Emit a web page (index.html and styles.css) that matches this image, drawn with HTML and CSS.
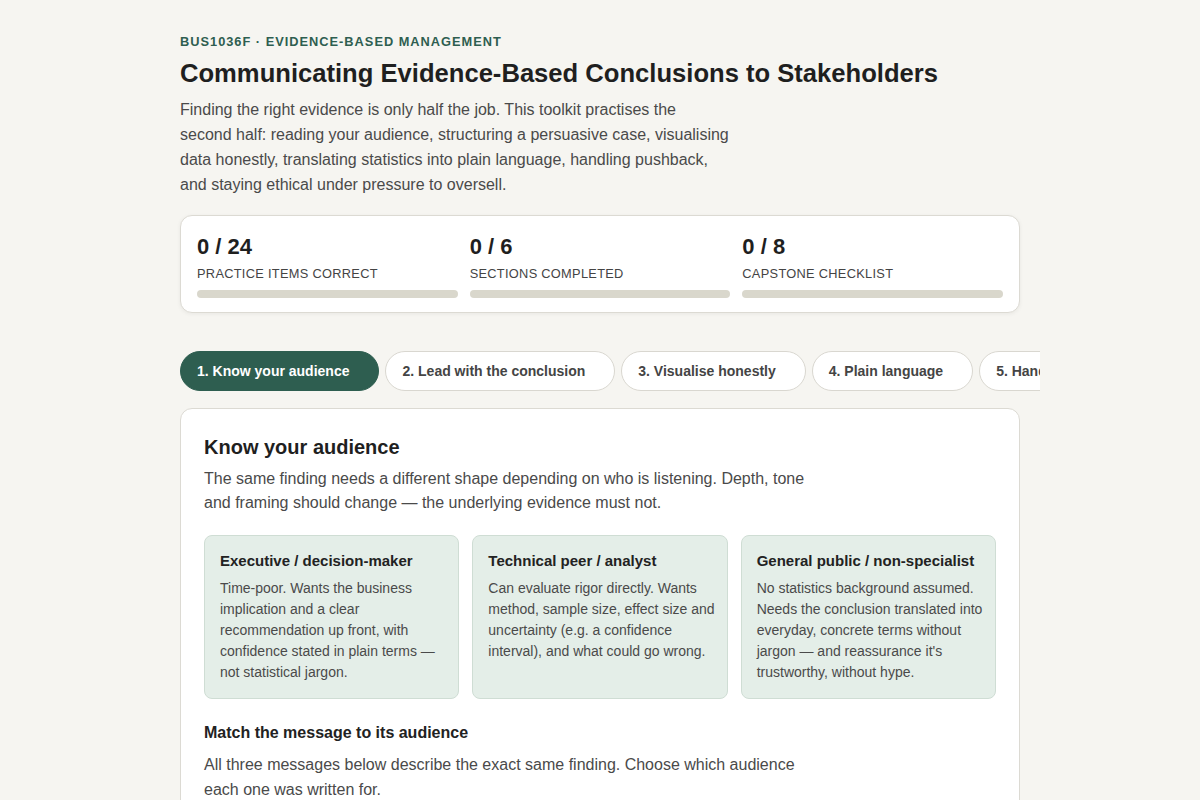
FILE: index.html
```html
<!DOCTYPE html>
<html lang="en">
<head>
<meta charset="utf-8">
<title>Communicating Evidence-Based Conclusions to Stakeholders</title>
<link rel="stylesheet" href="styles.css">
</head>
<body>
<main class="page">
  <header class="intro">
    <div class="kicker">BUS1036F · Evidence-Based Management</div>
    <h1 class="title">Communicating Evidence-Based Conclusions to Stakeholders</h1>
    <p class="lead">Finding the right evidence is only half the job. This toolkit practises the second half: reading your audience, structuring a persuasive case, visualising data honestly, translating statistics into plain language, handling pushback, and staying ethical under pressure to oversell.</p>
  </header>

  <section class="stats">
    <div class="stat">
      <div class="stat-num">0 / 24</div>
      <div class="stat-label">Practice items correct</div>
      <div class="bar"><div class="bar-fill" style="width:0%"></div></div>
    </div>
    <div class="stat">
      <div class="stat-num">0 / 6</div>
      <div class="stat-label">Sections completed</div>
      <div class="bar"><div class="bar-fill" style="width:0%"></div></div>
    </div>
    <div class="stat">
      <div class="stat-num">0 / 8</div>
      <div class="stat-label">Capstone checklist</div>
      <div class="bar"><div class="bar-fill" style="width:0%"></div></div>
    </div>
  </section>

  <nav class="tabs">
    <button class="tab active">1. Know your audience<span class="tab-mark"></span></button>
    <button class="tab">2. Lead with the conclusion<span class="tab-mark"></span></button>
    <button class="tab">3. Visualise honestly<span class="tab-mark"></span></button>
    <button class="tab">4. Plain language<span class="tab-mark"></span></button>
    <button class="tab">5. Handle pushback<span class="tab-mark"></span></button>
    <button class="tab">6. Stay ethical<span class="tab-mark"></span></button>
  </nav>

  <section class="panel">
    <h2 class="panel-title">Know your audience</h2>
    <p class="panel-text">The same finding needs a different shape depending on who is listening. Depth, tone and framing should change — the underlying evidence must not.</p>

    <div class="audiences">
      <div class="aud">
        <h3 class="aud-title">Executive / decision-maker</h3>
        <p class="aud-text">Time-poor. Wants the business implication and a clear recommendation up front, with confidence stated in plain terms — not statistical jargon.</p>
      </div>
      <div class="aud">
        <h3 class="aud-title">Technical peer / analyst</h3>
        <p class="aud-text">Can evaluate rigor directly. Wants method, sample size, effect size and uncertainty (e.g. a confidence interval), and what could go wrong.</p>
      </div>
      <div class="aud">
        <h3 class="aud-title">General public / non-specialist</h3>
        <p class="aud-text">No statistics background assumed. Needs the conclusion translated into everyday, concrete terms without jargon — and reassurance it's trustworthy, without hype.</p>
      </div>
    </div>

    <h3 class="sub-title">Match the message to its audience</h3>
    <p class="sub-text">All three messages below describe the exact same finding. Choose which audience each one was written for.</p>
  </section>
</main>
</body>
</html>
```

FILE: styles.css
```css
* { box-sizing: border-box; }
html, body { margin: 0; padding: 0; }
body {
  background: #f6f5f1;
  color: #222;
  font-family: "Liberation Sans", Arial, sans-serif;
}
.page {
  width: 840px;
  margin: 0 auto;
  padding-top: 34px;
}
.kicker {
  font-size: 12.8px;
  font-weight: 700;
  letter-spacing: 1px;
  text-transform: uppercase;
  color: #2e5e50;
  line-height: 16px;
}
.title {
  margin: 7px 0 0;
  font-size: 25.6px;
  line-height: 32px;
  font-weight: 700;
  color: #1f1f1f;
}
.lead {
  margin: 8px 0 0;
  max-width: 550px;
  font-size: 16px;
  line-height: 25px;
  color: #4a4a4a;
}
.stats {
  margin-top: 18px;
  background: #fff;
  border: 1px solid #dcdad3;
  border-radius: 12px;
  box-shadow: 0 1px 4px rgba(0,0,0,0.06);
  padding: 18px 16px 14px;
  display: grid;
  grid-template-columns: repeat(3, 1fr);
  gap: 12px;
}
.stat-num {
  font-size: 22px;
  font-weight: 700;
  line-height: 26px;
  color: #1f1f1f;
}
.stat-label {
  margin-top: 6px;
  font-size: 12.8px;
  letter-spacing: 0.3px;
  text-transform: uppercase;
  color: #444;
  line-height: 16px;
}
.bar {
  margin-top: 8px;
  height: 8px;
  border-radius: 4px;
  background: #d9d7cc;
  overflow: hidden;
}
.bar-fill { height: 100%; background: #2e5e50; }
.tabs {
  margin-top: 38px;
  margin-right: -20px;
  display: flex;
  gap: 6px;
  overflow: hidden;
}
.tab {
  flex: none;
  display: inline-flex;
  align-items: center;
  gap: 4px;
  height: 40px;
  padding: 0 16px;
  border-radius: 20px;
  border: 1px solid #d9d7d0;
  background: #fff;
  color: #444;
  font-family: "Liberation Sans", Arial, sans-serif;
  font-size: 14px;
  font-weight: 700;
  cursor: pointer;
}
.tab-mark {
  display: inline-block;
  width: 9px;
  height: 8px;
}
.tab.active {
  background: #2e5e50;
  border-color: #2e5e50;
  color: #fff;
}
.panel {
  margin-top: 17px;
  background: #fff;
  border: 1px solid #dcdad3;
  border-radius: 12px;
  padding: 26px 23px 24px;
  min-height: 420px;
}
.panel-title {
  margin: 0;
  font-size: 20px;
  line-height: 24px;
  font-weight: 700;
  color: #1f1f1f;
}
.panel-text {
  margin: 8px 0 0;
  max-width: 610px;
  font-size: 16px;
  line-height: 24px;
  color: #4a4a4a;
}
.audiences {
  margin-top: 20px;
  display: grid;
  grid-template-columns: repeat(3, 1fr);
  gap: 13px;
}
.aud {
  background: #e4eee8;
  border: 1px solid #cfddd4;
  border-radius: 8px;
  padding: 15px 11px 15px 15px;
}
.aud-title {
  margin: 0;
  font-size: 15px;
  line-height: 19px;
  font-weight: 700;
  color: #222;
}
.aud-text {
  margin: 8px 0 0;
  font-size: 14px;
  line-height: 21px;
  color: #4a4a4a;
}
.sub-title {
  margin: 24px 0 0;
  font-size: 16px;
  line-height: 20px;
  font-weight: 700;
  color: #222;
}
.sub-text {
  margin: 9px 0 0;
  max-width: 600px;
  font-size: 16px;
  line-height: 25px;
  color: #4a4a4a;
}
```
